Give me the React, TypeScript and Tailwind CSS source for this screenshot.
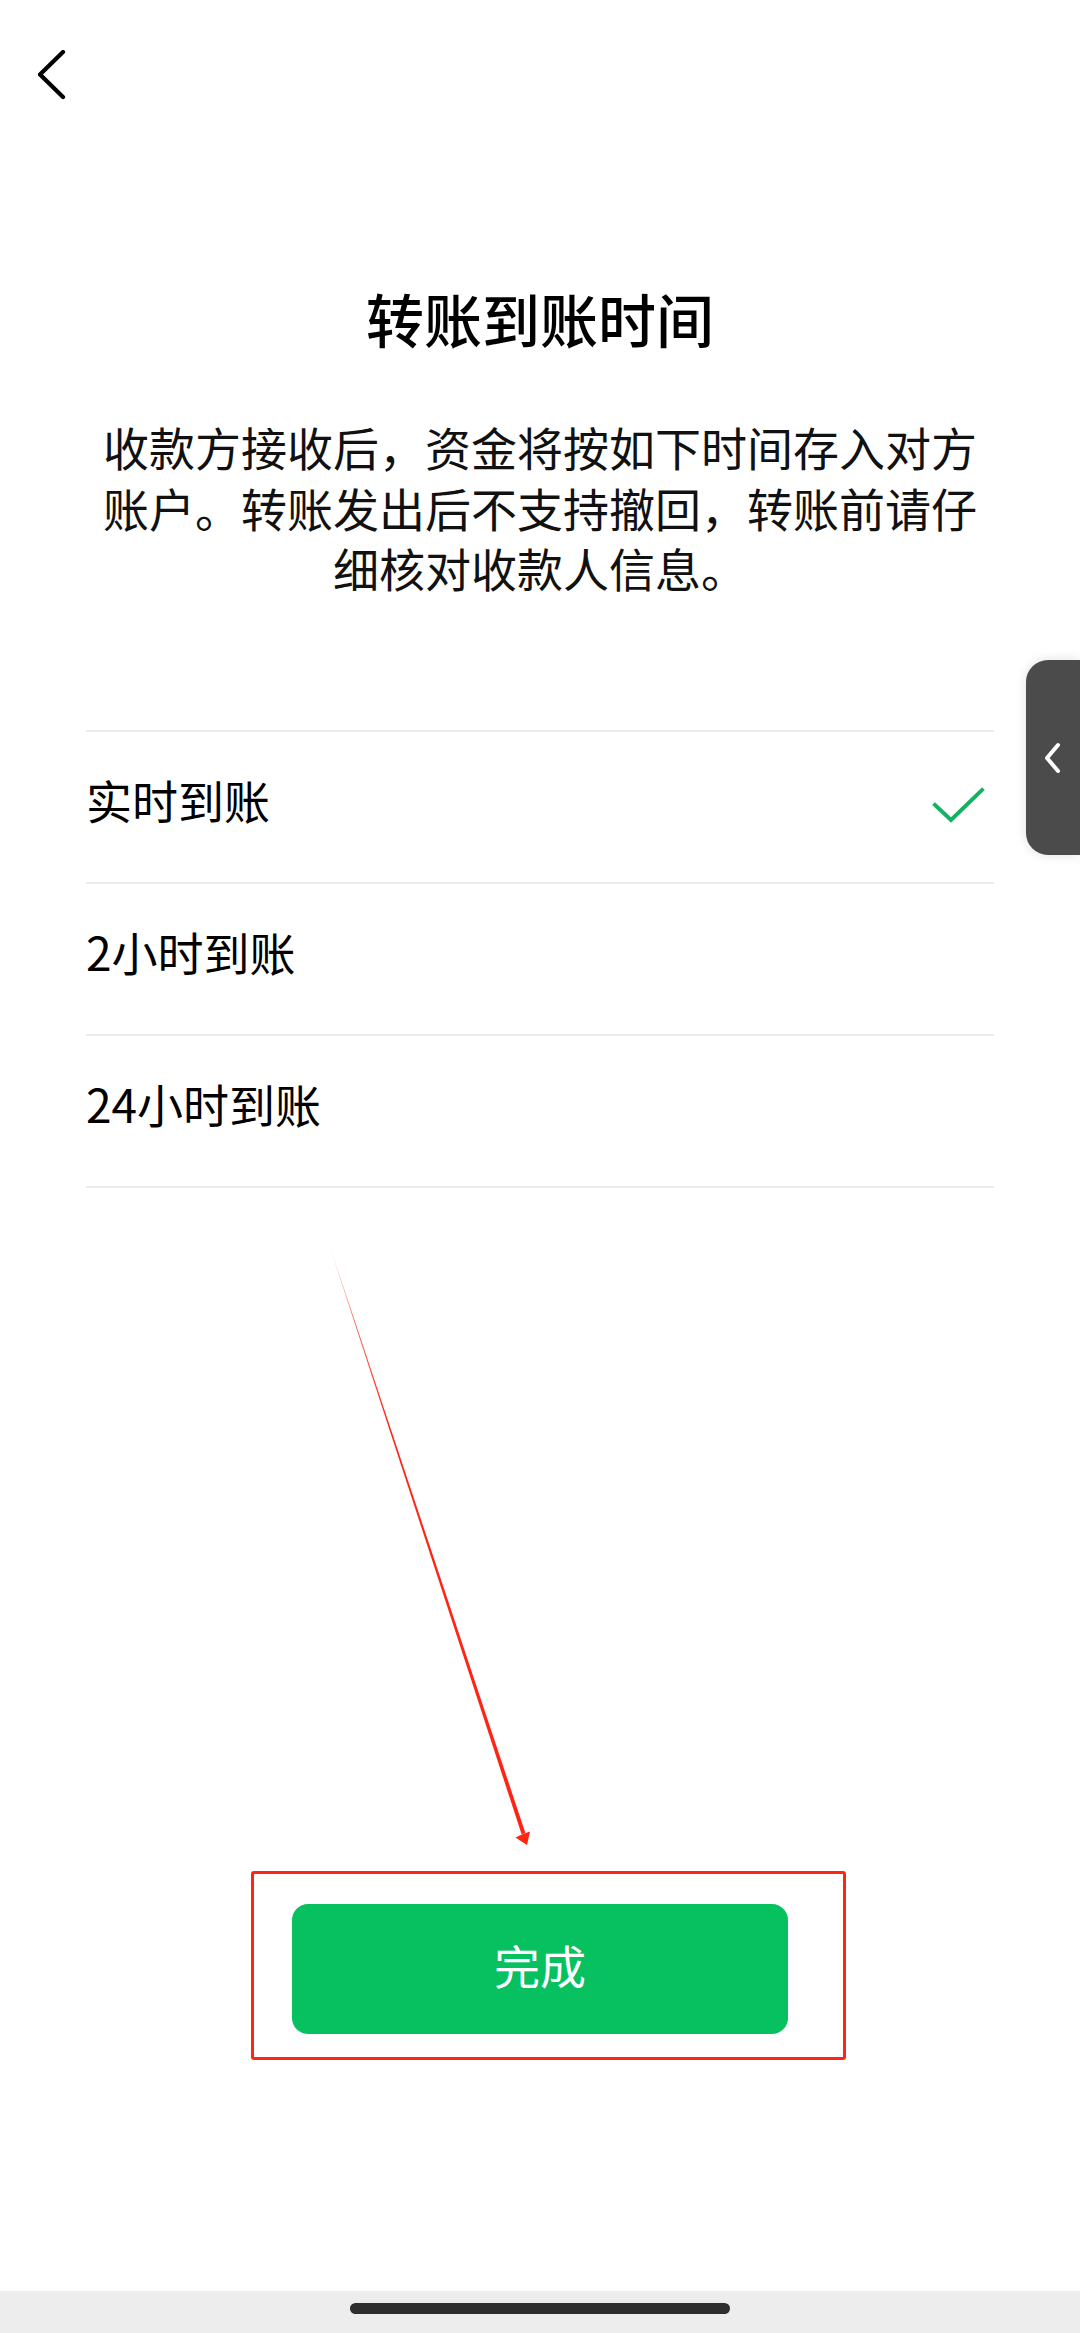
import React from "react";

const FONT = {
  fontFamily:
    '"Noto Sans CJK SC", "Noto Sans", "Liberation Sans", sans-serif',
};

const options = [
  { label: "实时到账", selected: true },
  { label: "2小时到账", selected: false },
  { label: "24小时到账", selected: false },
];

function BackChevron() {
  return (
    <svg width="28" height="50" viewBox="0 0 28 50" fill="none">
      <polyline
        points="25,2 2,24.5 25,47"
        stroke="#000"
        strokeWidth="4.2"
        strokeLinecap="round"
        strokeLinejoin="miter"
      />
    </svg>
  );
}

function Check() {
  return (
    <svg width="54" height="40" viewBox="0 0 54 40" fill="none">
      <polyline
        points="3,18 19,33 50,3"
        stroke="#15b262"
        strokeWidth="4"
        strokeLinecap="square"
        strokeLinejoin="miter"
      />
    </svg>
  );
}

function OptionRow({ label, selected }: { label: string; selected: boolean }) {
  return (
    <div className="flex h-[152px] items-center justify-between border-t-[2px] border-[#ececec] pr-[8px]">
      <span className="mb-[16px] text-[46px] leading-none text-black">{label}</span>
      {selected && <Check />}
    </div>
  );
}

function SideHandle() {
  return (
    <div className="absolute right-0 top-[660px] flex h-[195px] w-[54px] items-center justify-center rounded-l-[22px] bg-[#4b4b4b] shadow-[0_0_12px_rgba(0,0,0,0.12)]">
      <svg width="20" height="32" viewBox="0 0 20 32" fill="none">
        <polyline
          points="15,3 4,16 15,29"
          stroke="#fff"
          strokeWidth="4"
          strokeLinecap="round"
          strokeLinejoin="round"
        />
      </svg>
    </div>
  );
}

function Annotation() {
  return (
    <>
      <svg
        className="pointer-events-none absolute inset-0 h-full w-full"
        viewBox="0 0 1080 2333"
        fill="none"
      >
        <defs>
          <linearGradient
            id="arrowFade"
            gradientUnits="userSpaceOnUse"
            x1="330"
            y1="1247"
            x2="527"
            y2="1845"
          >
            <stop offset="0" stopColor="#ff2414" stopOpacity="0" />
            <stop offset="0.12" stopColor="#ff2414" stopOpacity="0.7" />
            <stop offset="0.3" stopColor="#ff2414" stopOpacity="1" />
            <stop offset="1" stopColor="#ff2414" stopOpacity="1" />
          </linearGradient>
        </defs>
        {/* tapered shaft */}
        <polygon
          points="330.2,1247 329.8,1247.1 521.6,1834.2 525.4,1832.9"
          fill="url(#arrowFade)"
        />
        {/* head */}
        <polygon points="527,1845 515.5,1837.5 523,1834 530,1831.5" fill="#ff2414" />
      </svg>
      <div className="pointer-events-none absolute left-[251px] top-[1871px] h-[189px] w-[595px] rounded-[3px] border-[3px] border-[#ff2414]" />
    </>
  );
}

export default function App() {
  return (
    <div
      className="relative flex h-[2333px] w-[1080px] flex-col overflow-hidden bg-white"
      style={FONT}
    >
      {/* nav bar */}
      <div className="flex h-[150px] items-start pl-[38px] pt-[50px]">
        <BackChevron />
      </div>

      <h1 className="mt-[128px] text-center text-[58px] font-medium leading-[80px] text-black">
        转账到账时间
      </h1>

      <p className="mx-auto mt-[58px] w-[880px] text-center text-[46px] leading-[60.5px] text-[#111]">
        收款方接收后，资金将按如下时间存入对方账户。转账发出后不支持撤回，转账前请仔细核对收款人信息。
      </p>

      <div className="mx-[86px] mt-[132px] border-b-[2px] border-[#ececec]">
        {options.map((o) => (
          <OptionRow key={o.label} label={o.label} selected={o.selected} />
        ))}
      </div>

      <div className="mt-[716px] flex justify-center">
        <button className="flex h-[130px] w-[496px] items-center justify-center rounded-[16px] bg-[#07c160] pb-[10px] text-[46px] leading-none text-white">
          完成
        </button>
      </div>

      <div className="mt-auto flex h-[42px] justify-center bg-[#ededed] pt-[12px]">
        <div className="h-[11px] w-[380px] rounded-full bg-[#2e2e2e]" />
      </div>

      <SideHandle />
      <Annotation />
    </div>
  );
}
